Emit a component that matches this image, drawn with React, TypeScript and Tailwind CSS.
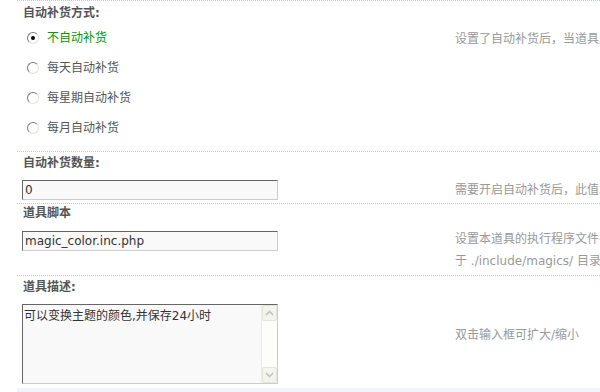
const FONT = "font-['DejaVu_Sans','Noto_Sans_CJK_SC',sans-serif]";

function Radio({ checked }: { checked?: boolean }) {
  return (
    <span className="flex h-[12px] w-[12px] items-center justify-center rounded-full border border-t-[#7a7a7a] border-l-[#7a7a7a] border-r-[#e2e2da] border-b-[#e2e2da] bg-white">
      {checked && <span className="h-[4px] w-[4px] rounded-full bg-black" />}
    </span>
  );
}

function TextInput({ value }: { value: string }) {
  return (
    <div className="flex h-[20px] w-[256px] items-center border border-t-[#666] border-l-[#666] border-r-[#ccc] border-b-[#ccc] bg-[#f9f9f9] pl-[2px] text-[12px] text-[#333]">
      {value}
    </div>
  );
}

function Chevron({ up }: { up?: boolean }) {
  return (
    <svg width="9" height="6" viewBox="0 0 9 6">
      <path
        d={up ? "M1 5 L4.5 1.5 L8 5" : "M1 1 L4.5 4.5 L8 1"}
        fill="none"
        stroke="#c3c3bd"
        strokeWidth="1.6"
      />
    </svg>
  );
}

function Textarea({ value }: { value: string }) {
  return (
    <div className="flex h-[80px] w-[256px] border border-t-[#666] border-l-[#666] border-r-[#ccc] border-b-[#ccc] bg-[#f9f9f9]">
      <div className="flex-1 pl-[1px] pt-[2px] text-[12px] leading-[18px] text-[#333]">
        {value}
      </div>
      <div className="flex w-[16px] flex-col justify-between border-l border-[#ecece4] bg-[#fdfdf9]">
        <div className="flex h-[16px] items-center justify-center rounded-[2px] border border-[#e4e4dc] bg-[#f4f4ee]">
          <Chevron up />
        </div>
        <div className="flex h-[16px] items-center justify-center rounded-[2px] border border-[#e4e4dc] bg-[#f4f4ee]">
          <Chevron />
        </div>
      </div>
    </div>
  );
}

const options = ["不自动补货", "每天自动补货", "每星期自动补货", "每月自动补货"];

export default function App() {
  return (
    <div className={`h-[392px] w-[600px] overflow-hidden bg-white ${FONT}`}>
      <div className="w-[800px] pl-[17px] text-[12px]">
        {/* 自动补货方式 */}
        <div className="h-[151px] border-t border-dotted border-[#a9d0ee]">
          <div className="h-[18px] pl-[6px] pt-[3px] font-bold leading-[18px] text-[#555]">
            自动补货方式:
          </div>
          <div className="mt-[4px] flex">
            <div className="w-[438px]">
              {options.map((o, i) => (
                <div key={o} className="flex h-[30px] items-center gap-[8px] pl-[10px]">
                  <Radio checked={i === 0} />
                  <span className={i === 0 ? "text-[#009900]" : "text-[#555]"}>{o}</span>
                </div>
              ))}
            </div>
            <div className="pt-[1px] leading-[30px] text-[#999]">
              设置了自动补货后，当道具库存为零时系统将自动补充库存
            </div>
          </div>
        </div>

        {/* 自动补货数量 */}
        <div className="h-[52px] border-t border-dotted border-[#a9d0ee]">
          <div className="mt-[2px] h-[18px] pl-[6px] font-bold leading-[18px] text-[#555]">
            自动补货数量:
          </div>
          <div className="mt-[8px] flex items-center">
            <div className="w-[438px] pl-[5px]">
              <TextInput value="0" />
            </div>
            <div className="text-[#999]">需要开启自动补货后，此值才有效</div>
          </div>
        </div>

        {/* 道具脚本 */}
        <div className="h-[72px] border-t border-dotted border-[#a9d0ee]">
          <div className="h-[18px] pl-[6px] font-bold leading-[18px] text-[#555]">道具脚本</div>
          <div className="mt-[6px] flex items-start">
            <div className="w-[438px] pl-[5px] pt-[3px]">
              <TextInput value="magic_color.inc.php" />
            </div>
            <div className="leading-[22px] text-[#999]">
              <div>设置本道具的执行程序文件名，该文件需放置</div>
              <div>于 ./include/magics/ 目录下</div>
            </div>
          </div>
        </div>

        {/* 道具描述 */}
        <div className="h-[113px] border-t border-dotted border-[#a9d0ee]">
          <div className="mt-[2px] h-[18px] pl-[6px] font-bold leading-[18px] text-[#555]">
            道具描述:
          </div>
          <div className="mt-[8px] flex items-start">
            <div className="w-[438px] pl-[5px]">
              <Textarea value="可以变换主题的颜色,并保存24小时" />
            </div>
            <div className="pt-[22px] leading-[18px] text-[#999]">双击输入框可扩大/缩小</div>
          </div>
        </div>

        <div className="h-[10px] bg-[#eef5fb]" />
      </div>
    </div>
  );
}
